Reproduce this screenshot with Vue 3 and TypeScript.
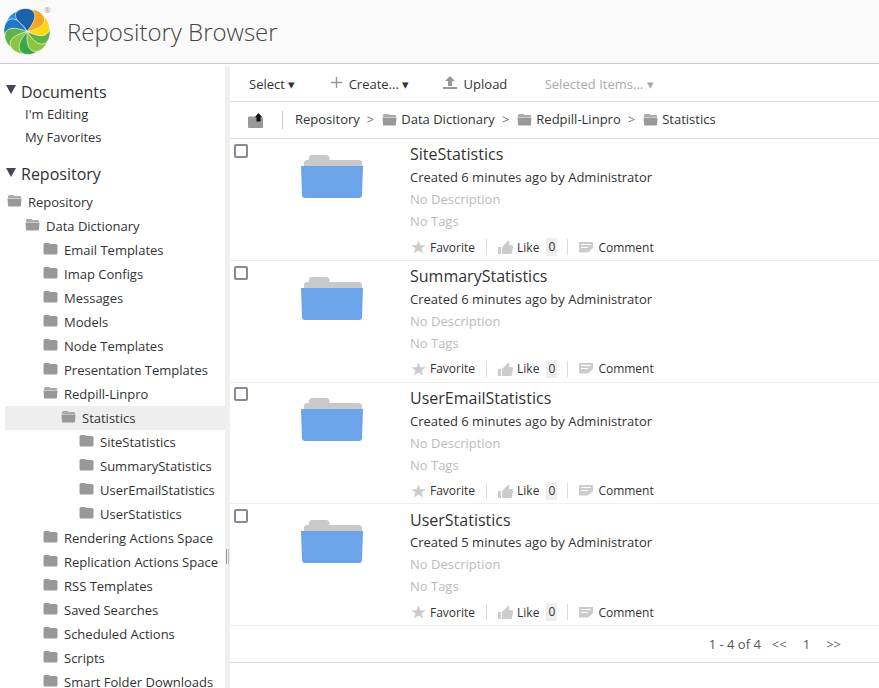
<script setup lang="ts">
interface TreeNode {
  label: string
  level: number
  open?: boolean
  selected?: boolean
}

const petals = [
  { angle: 324, color: '#2a8fd4' },
  { angle: 288, color: '#1e78c4' },
  { angle: 252, color: '#5fb346' },
  { angle: 216, color: '#8cc63f' },
  { angle: 180, color: '#39a64a' },
  { angle: 144, color: '#8cc63f' },
  { angle: 108, color: '#5fb346' },
  { angle: 76, color: '#fcd90f' },
  { angle: 40, color: '#f5a623' },
  { angle: 0, color: '#1b62ab' },
]

const tree: TreeNode[] = [
  { label: 'Repository', level: 0, open: true },
  { label: 'Data Dictionary', level: 1, open: true },
  { label: 'Email Templates', level: 2 },
  { label: 'Imap Configs', level: 2 },
  { label: 'Messages', level: 2 },
  { label: 'Models', level: 2 },
  { label: 'Node Templates', level: 2 },
  { label: 'Presentation Templates', level: 2 },
  { label: 'Redpill-Linpro', level: 2, open: true },
  { label: 'Statistics', level: 3, open: true, selected: true },
  { label: 'SiteStatistics', level: 4 },
  { label: 'SummaryStatistics', level: 4 },
  { label: 'UserEmailStatistics', level: 4 },
  { label: 'UserStatistics', level: 4 },
  { label: 'Rendering Actions Space', level: 2 },
  { label: 'Replication Actions Space', level: 2 },
  { label: 'RSS Templates', level: 2 },
  { label: 'Saved Searches', level: 2 },
  { label: 'Scheduled Actions', level: 2 },
  { label: 'Scripts', level: 2 },
  { label: 'Smart Folder Downloads', level: 2 },
]

const crumbs = ['Data Dictionary', 'Redpill-Linpro', 'Statistics']

const folders = [
  { name: 'SiteStatistics', age: '6 minutes' },
  { name: 'SummaryStatistics', age: '6 minutes' },
  { name: 'UserEmailStatistics', age: '6 minutes' },
  { name: 'UserStatistics', age: '5 minutes' },
]
</script>

<template>
  <div class="page">
    <header class="top">
      <svg class="logo" width="52" height="56" viewBox="0 0 52 56">
        <g transform="translate(27 27.500) scale(0.96)">
          <path
            v-for="p in petals"
            :key="p.angle"
            d="M0 0C-3 -8 -12 -10 -12 -17C-12 -22 -6 -24 -1 -24C5 -24 9 -20 8 -14C7 -9 3 -4 0 0Z"
            :fill="p.color"
            :transform="`rotate(${p.angle})`"
            stroke="#fff"
            stroke-width="0.6"
          />
        </g>
        <text x="44" y="9" font-size="8" fill="#999">®</text>
      </svg>
      <h1 class="title">Repository Browser</h1>
    </header>

    <div class="main">
      <aside class="side">
        <h2 class="side-head head-first"><span class="tri"></span>Documents</h2>
        <a class="side-link">I'm Editing</a>
        <a class="side-link">My Favorites</a>
        <h2 class="side-head"><span class="tri"></span>Repository</h2>
        <ul class="tree">
          <li
            v-for="node in tree"
            :key="node.label"
            class="tree-row"
            :class="{ selected: node.selected }"
            :style="{ paddingLeft: 7 + node.level * 18 + 'px' }"
          >
            <svg class="tree-icon" width="15" height="13" viewBox="0 0 15 13">
              <path v-if="node.open" d="M1 2.5Q1 1 2.5 1H6Q7 1 7.500 2H13Q14 2 14 3V4H1Z" fill="#aaa" />
              <path v-if="node.open" d="M0.500 4.500H14.500L14 11.500Q14 12.500 13 12.500H2Q1 12.500 1 11.500Z" fill="#999" />
              <path v-else d="M0.500 2.500Q0.500 1 2 1H5.500Q6.500 1 7 2H13Q14.500 2 14.500 3.500V11Q14.500 12.500 13 12.500H2Q0.500 12.500 0.500 11Z" fill="#999" />
            </svg>
            <span>{{ node.label }}</span>
          </li>
        </ul>
      </aside>

      <div class="split"><span class="grip"></span></div>

      <section class="content">
        <div class="toolbar">
          <span class="tool tool-select">Select <i class="caret">▾</i></span>
          <span class="tool tool-create">
            <svg width="11" height="11" viewBox="0 0 11 11"><path d="M5.500 0V11M0 5.500H11" stroke="#999" stroke-width="1.400" /></svg>
            Create... <i class="caret">▾</i>
          </span>
          <span class="tool tool-upload">
            <svg width="14" height="13" viewBox="0 0 14 13"><path d="M7 0L12 5H9V10H5V5H2ZM0 11H14V13H0Z" fill="#999" /></svg>
            Upload
          </span>
          <span class="tool tool-muted">Selected Items... <i class="caret">▾</i></span>
        </div>

        <div class="crumbs">
          <span class="up">
            <svg width="15" height="15" viewBox="0 0 15 15">
              <path d="M0 4.500Q0 3.500 1 3.500H7V15H1Q0 15 0 14Z" fill="#999" />
              <path d="M7 5H14Q15 5 15 6V14Q15 15 14 15H7Z" fill="#999" />
              <path d="M10.500 0L14.500 4.500H12.500V8.500H8.500V4.500H6.500Z" fill="#111" />
            </svg>
          </span>
          <span class="crumb-sep"></span>
          <span class="crumb">Repository</span>
          <template v-for="c in crumbs" :key="c">
            <span class="gt">&gt;</span>
            <svg class="crumb-icon" width="15" height="13" viewBox="0 0 15 13">
              <path d="M1 2.500Q1 1 2.500 1H6Q7 1 7.500 2H13Q14 2 14 3V4H1Z" fill="#aaa" />
              <path d="M0.500 4.500H14.500L14 11.500Q14 12.500 13 12.500H2Q1 12.500 1 11.500Z" fill="#999" />
            </svg>
            <span class="crumb">{{ c }}</span>
          </template>
        </div>

        <article v-for="f in folders" :key="f.name" class="row">
          <span class="check"></span>
          <svg class="big-folder" width="62" height="43" viewBox="0 0 62 43">
            <path d="M3 12V8Q3 5 6 5H8V3Q8 0 11 0H25Q28 0 28.500 3V5H58Q61 5 61 8V12Z" fill="#c9c9c9" />
            <path d="M0 11H62L61 40Q61 43 58 43H4Q1 43 1 40Z" fill="#6ba4e9" />
          </svg>
          <div class="info">
            <div class="name">{{ f.name }}</div>
            <div class="meta">Created {{ f.age }} ago by Administrator</div>
            <div class="meta empty">No Description</div>
            <div class="meta empty">No Tags</div>
            <div class="actions">
              <svg class="star" width="15" height="14" viewBox="0 0 16 14"><path d="M8 0L10 5H16L11.300 8.300L13 14L8 10.600L3 14L4.700 8.300L0 5H6Z" fill="#ccc" /></svg>
              <span class="act">Favorite</span>
              <span class="act-sep"></span>
              <svg class="thumb" width="15" height="14" viewBox="0 0 15 14"><path d="M0 7H3V14H0ZM4 7L9 2Q10 0 11 1Q12 2 11 5H14Q15 5 15 7L14 13Q14 14 12 14H4Z" fill="#ccc" /></svg>
              <span class="act">Like</span>
              <span class="count">0</span>
              <span class="act-sep"></span>
              <svg class="bubble" width="14" height="11" viewBox="0 0 14 11"><path d="M0 0H14V6L9 10.500H0ZM2 2V3H12V2ZM2 5V6H9V5Z" fill="#ccc" fill-rule="evenodd" /></svg>
              <span class="act">Comment</span>
            </div>
          </div>
        </article>

        <div class="pager">
          <span>1 - 4 of 4</span>
          <span class="nav nav-first">&lt;&lt;</span>
          <span class="num">1</span>
          <span class="nav">&gt;&gt;</span>
        </div>
      </section>
    </div>
  </div>
</template>

<style>
html,
body {
  margin: 0;
  overflow: hidden;
}
</style>

<style scoped>
.page {
  height: 688px;
  display: flex;
  flex-direction: column;
  overflow: hidden;
  font-family: "Open Sans", "Liberation Sans", sans-serif;
  font-size: 13px;
  color: #333;
  background: #fff;
}

.top {
  flex: 0 0 63px;
  display: flex;
  align-items: center;
  background: #fafafa;
  border-bottom: 1px solid #ccc;
}

.title {
  margin: 0 0 0 15px;
  font-size: 24px;
  font-weight: 300;
  color: #444;
}

.main {
  flex: 1;
  display: flex;
  min-height: 0;
  padding-top: 2px;
}

.side {
  width: 225px;
  flex: none;
  overflow: hidden;
}

.side-head {
  margin: 13px 0 0 6px;
  height: 24px;
  line-height: 24px;
  font-size: 16px;
  font-weight: 400;
  display: flex;
  align-items: center;
}

.side-head.head-first {
  margin-top: 14px;
  height: 23px;
}

.tri {
  width: 0;
  height: 0;
  border-left: 5px solid transparent;
  border-right: 5px solid transparent;
  border-top: 9px solid #445;
  margin-right: 5px;
  margin-top: -4px;
}

.side-link {
  display: block;
  padding-left: 25px;
  height: 23px;
  line-height: 23px;
}

.tree {
  list-style: none;
  margin: 4px 0 0;
  padding: 0;
}

.tree-row {
  height: 24px;
  display: flex;
  align-items: center;
  gap: 6px;
  white-space: nowrap;
}

.tree-row.selected {
  background: linear-gradient(to right, #fff 5px, #eee 5px);
}

.tree-icon {
  flex: none;
  margin-top: -3px;
}

.split {
  width: 5px;
  flex: none;
  background: #f0f0f0;
  position: relative;
}

.grip {
  position: absolute;
  left: 1px;
  top: 483px;
  width: 1px;
  height: 15px;
  border-left: 1px solid #999;
  border-right: 1px solid #bbb;
}

.content {
  flex: 1;
  min-width: 0;
}

.toolbar {
  height: 35px;
  display: flex;
  align-items: center;
  border-bottom: 1px solid #ddd;
}

.tool {
  display: flex;
  align-items: center;
  white-space: pre;
}

.tool svg {
  margin-right: 3px;
  margin-top: -3px;
}

.caret {
  font-style: normal;
  font-size: 13px;
}

.tool-select {
  margin-left: 19px;
}

.tool-create {
  margin-left: 36px;
}

.tool-upload {
  margin-left: 34px;
}

.tool-muted {
  margin-left: 34px;
  color: #aaa;
}

.crumbs {
  height: 36px;
  display: flex;
  align-items: center;
  border-bottom: 1px solid #ddd;
  line-height: 34px;
}

.crumb {
  margin-top: -2px;
}

.up {
  margin-left: 18px;
  display: flex;
}

.crumb-sep {
  width: 1px;
  height: 18px;
  background: #ccc;
  margin: 0 12px 0 19px;
}

.gt {
  color: #777;
  margin: -2px 7.5px 0 7px;
}

.crumb-icon {
  margin-right: 4.5px;
  margin-top: -1px;
  flex: none;
}

.row {
  height: 121.75px;
  box-sizing: border-box;
  display: flex;
  border-bottom: 1px solid #eee;
}

.check {
  width: 10px;
  height: 10px;
  margin: 4.8px 0 0 4px;
  border: 2px solid #889;
  border-radius: 2px;
  flex: none;
}

.big-folder {
  margin: 15.8px 0 0 53px;
  flex: none;
}

.info {
  margin-left: 47px;
  padding-top: 4.3px;
}

.name {
  font-size: 16px;
  line-height: 22.7px;
}

.meta {
  line-height: 22px;
}

.empty {
  color: #bbb;
}

.actions {
  margin-top: 4.2px;
  display: flex;
  align-items: center;
  height: 22px;
}

.act {
  font-size: 12px;
  white-space: nowrap;
}

.star {
  margin: 0 4px 0 1px;
}

.thumb {
  margin-right: 4px;
}

.bubble {
  margin-right: 5px;
}

.act-sep {
  width: 1px;
  height: 16px;
  background: #ddd;
  margin: 0 11px 0 11px;
}

.count {
  font-size: 12px;
  background: #eee;
  width: 11px;
  text-align: center;
  margin-left: 7px;
  margin-right: -1px;
  line-height: 18px;
}

.pager {
  height: 36px;
  display: flex;
  align-items: center;
  justify-content: flex-end;
  padding-right: 38px;
  border-bottom: 1px solid #ddd;
  color: #555;
}

.nav {
  color: #666;
}

.nav-first {
  margin-left: 11px;
}

.num {
  margin: 0 16px 0 16px;
}
</style>
